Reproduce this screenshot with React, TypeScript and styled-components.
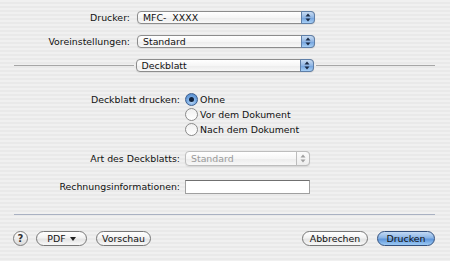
import styled, { createGlobalStyle } from "styled-components";

const GlobalStyle = createGlobalStyle`
  html, body {
    margin: 0;
    padding: 0;
  }
  body {
    font-family: "DejaVu Sans", "Liberation Sans", sans-serif;
    font-size: 9.4px;
    color: #000;
  }
`;

const Sheet = styled.div`
  width: 450px;
  height: 261px;
  box-sizing: border-box;
  background: repeating-linear-gradient(
    to bottom,
    #f0f0f0 0px,
    #f0f0f0 2px,
    #e9e9e9 2px,
    #e9e9e9 4px
  );
  display: flex;
  flex-direction: column;
  padding-top: 11px;
`;

const TopGrid = styled.div`
  display: grid;
  grid-template-columns: 130px 178px;
  column-gap: 7px;
  row-gap: 11px;
  align-items: center;
`;

const Label = styled.div<{ $lh?: number }>`
  text-align: right;
  white-space: nowrap;
  line-height: ${(p) => p.$lh ?? 13}px;
  color: #111;
`;

const Popup = styled.div<{ $width: number; $disabled?: boolean }>`
  position: relative;
  width: ${(p) => p.$width}px;
  height: ${(p) => (p.$disabled ? 15 : 13)}px;
  box-sizing: border-box;
  border: 1px solid ${(p) => (p.$disabled ? "#bdbdbd" : "#8c8c8c")};
  border-radius: 4px;
  background: linear-gradient(to bottom, #ffffff 0%, #f6f6f6 50%, #ececec 51%, #f8f8f8 100%);
  display: flex;
  align-items: center;
  padding-left: 5px;
  white-space: pre;
  color: ${(p) => (p.$disabled ? "#9a9a9a" : "#111")};
  line-height: 11px;
  box-shadow: 0 1px 1px rgba(0, 0, 0, 0.08);
`;

const PopupArrows = styled.div<{ $disabled?: boolean }>`
  position: absolute;
  right: -1px;
  top: -1px;
  bottom: -1px;
  width: 14px;
  box-sizing: border-box;
  border-radius: 0 4px 4px 0;
  border: 1px solid ${(p) => (p.$disabled ? "#bdbdbd" : "#5f7fa8")};
  background: ${(p) =>
    p.$disabled
      ? "linear-gradient(to bottom, #fbfbfb, #eeeeee)"
      : "linear-gradient(to bottom, #c9dcf2 0%, #8fb5e4 50%, #6f9fdb 51%, #a8d0f6 100%)"};
  display: flex;
  align-items: center;
  justify-content: center;
`;

const Arrows = ({ disabled }: { disabled?: boolean }) => (
  <svg width="6" height="9" viewBox="0 0 6 9">
    <path d="M3 0.5 L5.5 3.5 H0.5 Z" fill={disabled ? "#a0a0a0" : "#1a2a44"} />
    <path d="M3 8.5 L5.5 5.5 H0.5 Z" fill={disabled ? "#a0a0a0" : "#1a2a44"} />
  </svg>
);

const PopupButton = ({
  text,
  width,
  disabled,
}: {
  text: string;
  width: number;
  disabled?: boolean;
}) => (
  <Popup $width={width} $disabled={disabled}>
    {text}
    <PopupArrows $disabled={disabled}>
      <Arrows disabled={disabled} />
    </PopupArrows>
  </Popup>
);

const SectionRow = styled.div`
  display: flex;
  align-items: center;
  margin-top: 11px;
  padding: 0 15px 0 14px;
  gap: 2px;
`;

const Line = styled.div`
  flex: 1;
  height: 1px;
  background: #a6a6a6;
`;

const FormGrid = styled.div<{ $top: number }>`
  display: grid;
  grid-template-columns: 180px 1fr;
  column-gap: 5px;
  margin-top: ${(p) => p.$top}px;
  align-items: start;
`;

const RadioGroup = styled.div`
  display: flex;
  flex-direction: column;
  gap: 2px;
`;

const RadioRow = styled.div`
  display: flex;
  align-items: center;
  gap: 2px;
  line-height: 13px;
  color: #111;
`;

const RadioDot = styled.div<{ $checked?: boolean }>`
  width: 13px;
  height: 13px;
  box-sizing: border-box;
  border-radius: 50%;
  border: 1px solid ${(p) => (p.$checked ? "#3d5f8f" : "#8a8a8a")};
  background: ${(p) =>
    p.$checked
      ? "radial-gradient(circle at 50% 70%, #b6d6f8 0%, #6a9fdc 60%, #4a7fc0 100%)"
      : "linear-gradient(to bottom, #f0f0f0, #ffffff)"};
  display: flex;
  align-items: center;
  justify-content: center;
  &::after {
    content: "";
    display: ${(p) => (p.$checked ? "block" : "none")};
    width: 5px;
    height: 5px;
    border-radius: 50%;
    background: #10223d;
  }
`;

const TextField = styled.div`
  width: 125px;
  height: 14px;
  box-sizing: border-box;
  background: #fff;
  border: 1px solid #a0a0a0;
  border-top-color: #707070;
`;

const Separator = styled.div`
  height: 1px;
  background: #a9b1c2;
  margin: 20px 15px 0 14px;
`;

const Footer = styled.div`
  display: flex;
  align-items: center;
  margin-top: 16px;
  padding: 0 15px 0 13px;
`;

const HelpButton = styled.div`
  width: 15px;
  height: 15px;
  box-sizing: border-box;
  border-radius: 50%;
  border: 1px solid #7d7d7d;
  background: linear-gradient(to bottom, #ffffff, #dadada);
  display: flex;
  align-items: center;
  justify-content: center;
  font-weight: bold;
  font-size: 10px;
  color: #333;
  margin-right: 8px;
`;

const PushButton = styled.div<{ $width: number; $gap?: number; $default?: boolean }>`
  width: ${(p) => p.$width}px;
  height: 15px;
  margin-left: ${(p) => p.$gap ?? 0}px;
  box-sizing: border-box;
  border-radius: 8px;
  border: 1px solid ${(p) => (p.$default ? "#33507d" : "#777")};
  background: ${(p) =>
    p.$default
      ? "linear-gradient(to bottom, #c4dbf5 0%, #8bb5e6 45%, #5f96da 55%, #9ccaf5 100%)"
      : "linear-gradient(to bottom, #ffffff 0%, #f2f2f2 45%, #e4e4e4 55%, #f8f8f8 100%)"};
  display: flex;
  align-items: center;
  justify-content: center;
  gap: 4px;
  line-height: 11px;
  white-space: nowrap;
  color: #111;
`;

const Spacer = styled.div`
  flex: 1;
`;

export default function App() {
  return (
    <>
      <GlobalStyle />
      <Sheet>
        <TopGrid>
          <Label>Drucker:</Label>
          <PopupButton text="MFC-  XXXX" width={178} />
          <Label>Voreinstellungen:</Label>
          <PopupButton text="Standard" width={178} />
        </TopGrid>

        <SectionRow>
          <Line />
          <PopupButton text="Deckblatt" width={178} />
          <Line />
        </SectionRow>

        <FormGrid $top={21}>
          <Label>Deckblatt drucken:</Label>
          <RadioGroup>
            <RadioRow>
              <RadioDot $checked />
              Ohne
            </RadioRow>
            <RadioRow>
              <RadioDot />
              Vor dem Dokument
            </RadioRow>
            <RadioRow>
              <RadioDot />
              Nach dem Dokument
            </RadioRow>
          </RadioGroup>
        </FormGrid>

        <FormGrid $top={15}>
          <Label $lh={15}>Art des Deckblatts:</Label>
          <PopupButton text="Standard" width={125} disabled />
        </FormGrid>

        <FormGrid $top={14}>
          <Label $lh={14}>Rechnungsinformationen:</Label>
          <TextField />
        </FormGrid>

        <Separator />

        <Footer>
          <HelpButton>?</HelpButton>
          <PushButton $width={51}>
            PDF
            <svg width="6" height="4" viewBox="0 0 6 4">
              <path d="M0 0 H6 L3 4 Z" fill="#222" />
            </svg>
          </PushButton>
          <PushButton $width={55} $gap={9}>
            Vorschau
          </PushButton>
          <Spacer />
          <PushButton $width={66}>Abbrechen</PushButton>
          <PushButton $width={58} $gap={9} $default>
            Drucken
          </PushButton>
        </Footer>
      </Sheet>
    </>
  );
}
